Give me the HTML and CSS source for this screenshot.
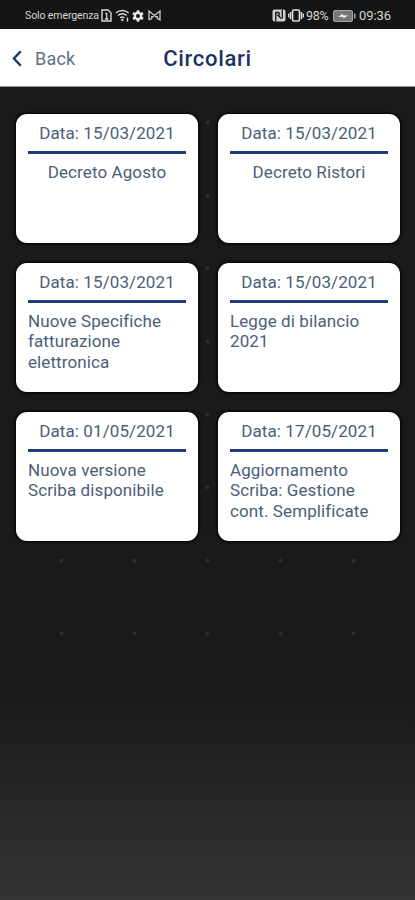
FILE: index.html
```html
<!DOCTYPE html>
<html lang="it">
  <head>
    <meta charset="UTF-8" />
    <meta name="viewport" content="width=device-width, initial-scale=1.0" />
    <title>Circolari</title>
    <link rel="stylesheet" href="styles.css">
  </head>
  <body>
    <div class="status-bar">
      <div class="status-left">
        <span class="carrier">Solo emergenza</span>
        <svg class="icon-sim" width="11" height="13" viewBox="0 0 11 13">
          <path d="M1 1h6l3 3v8H1z" fill="none" stroke="#d8d8d8" stroke-width="1.4" />
          <path d="M4.300 4.500h1.400V10M4 10h3.400" fill="none" stroke="#d8d8d8" stroke-width="1.300" />
        </svg>
        <svg class="icon-wifi" width="15" height="13" viewBox="0 0 15 13">
          <path d="M.8 4C4.500.6 10 .6 13.700 4M3 6.500c2.400-2.400 6.200-2.400 8.600 0M5.200 9c1.300-1.300 2.900-1.300 4.200 0" fill="none" stroke="#d0d0d0" stroke-width="1.500" />
          <circle cx="7.300" cy="11" r="1.200" fill="#d8d8d8" />
          <path d="M12.500 8.500v4" stroke="#d8d8d8" stroke-width="1.400" />
        </svg>
        <svg class="icon-gear" width="12" height="12" viewBox="0 0 12 12">
          <circle cx="6" cy="6" r="3.200" fill="none" stroke="#e8e8e8" stroke-width="2.400" />
          <path d="M6 .3v2M6 9.700v2M1 3.100l1.800 1M9.200 7.900l1.800 1M1 8.900l1.800-1M9.200 4.100l1.800-1" stroke="#e8e8e8" stroke-width="2.600" />
        </svg>
        <svg class="icon-cast" width="13" height="11" viewBox="0 0 13 11">
          <path d="M1 10V1l11 9V1L1 10M3.700 9.500V6M9.300 9.500V6" fill="none" stroke="#bdbdbd" stroke-width="1.400" />
        </svg>
      </div>
      <div class="status-right">
        <svg width="14" height="13" viewBox="0 0 14 13">
          <rect x=".5" y=".5" width="13" height="12" rx="2" fill="#cfcfcf" />
          <path d="M3.700 12.500V3.500h2.200c2 0 2 3 0 3l3.300 3M10.300 9.500V.5" fill="none" stroke="#161616" stroke-width="1.300" />
        </svg>
        <svg class="icon-vibrate" width="16" height="13" viewBox="0 0 16 13">
          <rect x="4.500" y="1" width="7" height="11" rx="1.500" fill="none" stroke="#dcdcdc" stroke-width="1.700" />
          <path d="M2.500 3v7M.7 4.500v4M13.500 3v7M15.300 4.500v4" stroke="#dcdcdc" stroke-width="1.300" />
        </svg>
        <span class="battery-level">98%</span>
        <svg class="icon-battery" width="23" height="12" viewBox="0 0 23 12">
          <rect x=".5" y=".5" width="19" height="11" rx="1.500" fill="#777" stroke="#a5a5a5" />
          <path d="M5 6.800L10 4v1.500h5L10.500 8.300V6.800z" fill="#fff" />
          <path d="M21.700 3.500v5" stroke="#a5a5a5" stroke-width="1.500" />
        </svg>
        <span class="clock">09:36</span>
      </div>
    </div>
    <header>
      <a class="back">
        <svg width="10" height="17" viewBox="0 0 10 17">
          <path d="M8.700 1.300L2 8.500l6.700 7.200" fill="none" stroke="#17366f" stroke-width="2.400" />
        </svg>
        <span>Back</span>
      </a>
      <h1>Circolari</h1>
    </header>
    <main>
      <div class="grid">
        <div class="card">
          <p class="date">Data: 15/03/2021</p>
          <p class="title centered">Decreto Agosto</p>
        </div>
        <div class="card">
          <p class="date">Data: 15/03/2021</p>
          <p class="title centered">Decreto Ristori</p>
        </div>
        <div class="card">
          <p class="date">Data: 15/03/2021</p>
          <p class="title">Nuove Specifiche fatturazione elettronica</p>
        </div>
        <div class="card">
          <p class="date">Data: 15/03/2021</p>
          <p class="title">Legge di bilancio 2021</p>
        </div>
        <div class="card">
          <p class="date">Data: 01/05/2021</p>
          <p class="title">Nuova versione Scriba disponibile</p>
        </div>
        <div class="card">
          <p class="date">Data: 17/05/2021</p>
          <p class="title">Aggiornamento Scriba: Gestione cont. Semplificate</p>
        </div>
      </div>
    </main>
  </body>
</html>
```

FILE: styles.css
```css
* {
  box-sizing: border-box;
}
body {
  font-family: Roboto, "Liberation Sans", sans-serif;
  margin: 0;
  height: 900px;
  display: flex;
  flex-direction: column;
  overflow: hidden;
  background-color: #1a1a1a;
}
.status-bar {
  height: 29px;
  padding: 2px 23px 0 25px;
  display: flex;
  justify-content: space-between;
  align-items: center;
  background-color: #151515;
  color: #d6d6d6;
}
.status-left,
.status-right {
  display: flex;
  align-items: center;
  white-space: nowrap;
}
.carrier {
  width: 76px;
  font-size: 10.5px;
  letter-spacing: -0.1px;
}
.icon-sim {
  margin-right: 3px;
}
.icon-wifi {
  margin-right: 2px;
}
.icon-gear {
  margin-right: 4px;
}
.icon-vibrate {
  margin-left: 2px;
}
.battery-level {
  margin-left: 2px;
  width: 25px;
  font-size: 12.5px;
  letter-spacing: -0.3px;
}
.icon-battery {
  margin-left: 2px;
  margin-right: 3px;
}
.clock {
  width: 33px;
  font-size: 13px;
  letter-spacing: -0.1px;
}
header {
  height: 58px;
  flex-shrink: 0;
  display: grid;
  grid-template-columns: 1fr auto 1fr;
  align-items: center;
  background-color: #fff;
  border-bottom: 1px solid #9a9a9a;
}
.back {
  display: flex;
  align-items: center;
  gap: 13px;
  padding: 1px 0 0 12px;
  color: #5c7189;
  font-size: 18px;
  letter-spacing: 0.2px;
}
h1 {
  margin: 2px 0 0;
  color: #1c3263;
  font-size: 22px;
  font-weight: 500;
  letter-spacing: 0.7px;
}
main {
  flex: 1;
  padding: 27px 15px 0 16px;
  /* faint dots, then a fade to grey at the bottom */
  background:
    linear-gradient(transparent 583px, #1a1a1a 583px, #1a1a1a 600px, #333 813px),
    radial-gradient(circle at 36.5px 36.5px, #303030 1px, transparent 2.5px) 25px -1px / 73px 73px,
    #1a1a1a;
}
.grid {
  display: grid;
  grid-template-columns: 1fr 1fr;
  grid-auto-rows: 129px;
  gap: 20px;
}
.card {
  padding: 9px 12px 0;
  background-color: #fff;
  border-radius: 11px;
  box-shadow: 0 0 3px 1px #000;
  color: #4a6078;
  font-size: 17px;
  line-height: 20.6px;
  letter-spacing: 0.1px;
}
.card p {
  margin: 0;
}
.card .date {
  padding-bottom: 7px;
  border-bottom: 3px solid #1d3d7c;
  text-align: center;
}
.card .title {
  padding-top: 8px;
}
.card .centered {
  text-align: center;
}
```
